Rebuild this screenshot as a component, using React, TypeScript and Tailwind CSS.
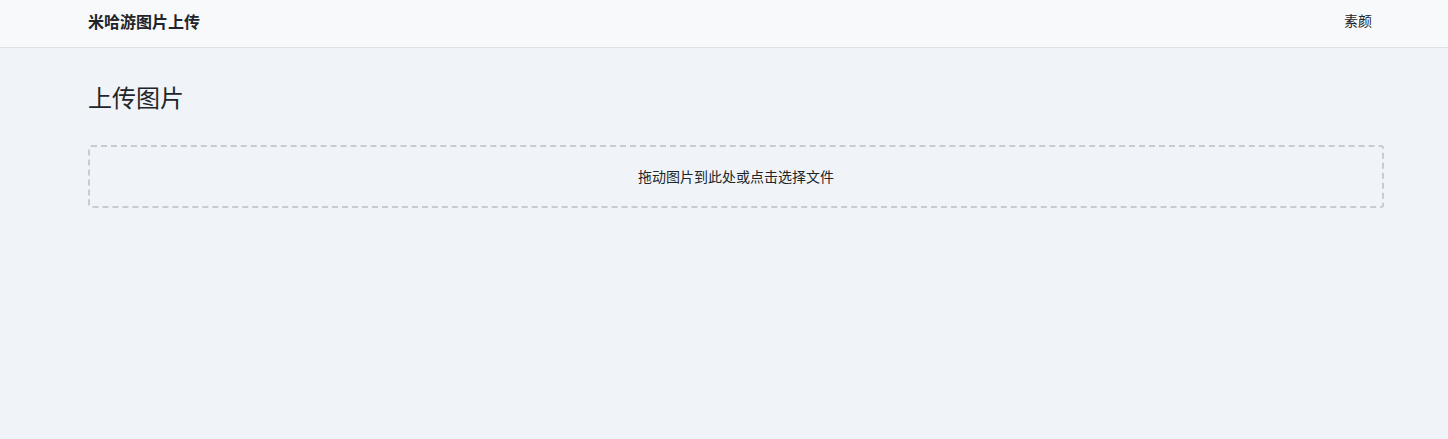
import React from "react";

const font = '"Noto Sans CJK SC", "Liberation Sans", sans-serif';

export default function App() {
  return (
    <div className="min-h-[439px] bg-[#f0f4f8] text-[#212529]" style={{ fontFamily: font }}>
      <header className="h-12 bg-[#f8f9fa] border-b border-[#dee2e6] flex items-center justify-between pl-[88px] pr-[76px] pb-[6px]">
        <span className="text-[16px] font-bold text-[#212529]">米哈游图片上传</span>
        <span className="text-[14px] text-[#212529]">素颜</span>
      </header>
      <main className="pl-[88px] pr-[64px] pt-[33px]">
        <h1 className="text-[24px] leading-[32px] font-normal text-[#212529]">上传图片</h1>
        <div className="mt-[32px] h-[63px] border-2 border-dashed border-[#c8ccd0] rounded-[3px] flex items-center justify-center">
          <span className="text-[14px] text-[#212529]">拖动图片到此处或点击选择文件</span>
        </div>
      </main>
    </div>
  );
}
